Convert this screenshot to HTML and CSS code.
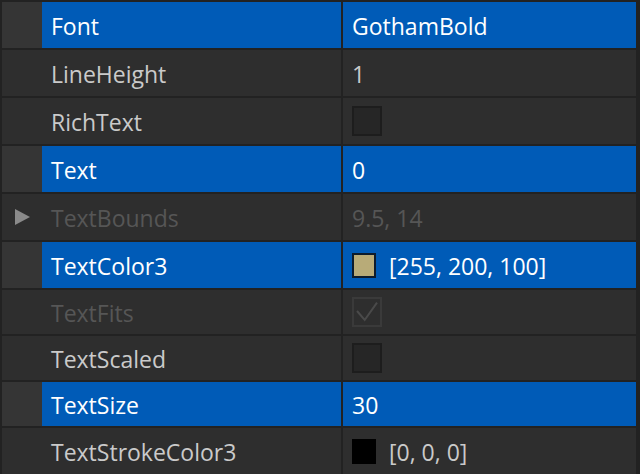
FILE: index.html
```html
<!DOCTYPE html>
<html>
<head>
<meta charset="utf-8">
<link rel="stylesheet" href="styles.css">
</head>
<body>
<div class="props">
  <div class="row selected">
    <div class="name-cell"><span class="gutter"></span><span class="name">Font</span></div>
    <div class="value-cell"><span class="value">GothamBold</span></div>
  </div>
  <div class="row">
    <div class="name-cell"><span class="gutter"></span><span class="name">LineHeight</span></div>
    <div class="value-cell"><span class="value">1</span></div>
  </div>
  <div class="row">
    <div class="name-cell"><span class="gutter"></span><span class="name">RichText</span></div>
    <div class="value-cell"><span class="checkbox"></span></div>
  </div>
  <div class="row selected">
    <div class="name-cell"><span class="gutter"></span><span class="name">Text</span></div>
    <div class="value-cell"><span class="value">0</span></div>
  </div>
  <div class="row disabled">
    <div class="name-cell"><span class="gutter"><svg class="expander" width="15" height="16" viewBox="0 0 15 16"><polygon points="0,0 15,8 0,16" fill="#8a8a8a"/></svg></span><span class="name">TextBounds</span></div>
    <div class="value-cell"><span class="value">9.5, 14</span></div>
  </div>
  <div class="row selected">
    <div class="name-cell"><span class="gutter"></span><span class="name">TextColor3</span></div>
    <div class="value-cell"><span class="swatch swatch-tan"></span><span class="value">[255, 200, 100]</span></div>
  </div>
  <div class="row disabled row-short">
    <div class="name-cell"><span class="gutter"></span><span class="name">TextFits</span></div>
    <div class="value-cell"><span class="checkbox checkbox-disabled"><svg width="26" height="26" viewBox="0 0 26 26"><polyline points="3,12 10.7,21 23,3.7" fill="none" stroke="#4a4a4a" stroke-width="2"/></svg></span></div>
  </div>
  <div class="row row-short">
    <div class="name-cell"><span class="gutter"></span><span class="name">TextScaled</span></div>
    <div class="value-cell"><span class="checkbox"></span></div>
  </div>
  <div class="row selected row-short">
    <div class="name-cell"><span class="gutter"></span><span class="name">TextSize</span></div>
    <div class="value-cell"><span class="value">30</span></div>
  </div>
  <div class="row">
    <div class="name-cell"><span class="gutter"></span><span class="name">TextStrokeColor3</span></div>
    <div class="value-cell"><span class="swatch swatch-black"></span><span class="value">[0, 0, 0]</span></div>
  </div>
</div>
</body>
</html>
```
FILE: styles.css
```css
html, body {
  margin: 0;
  padding: 0;
  background: #222222;
  overflow: hidden;
}

body {
  width: 640px;
  height: 474px;
  font-family: "Open Sans", "Liberation Sans", sans-serif;
  font-size: 23px;
}

.props {
  display: flex;
  flex-direction: column;
  gap: 2px;
  padding: 2px 4px 0 2px;
}

.row {
  display: grid;
  grid-template-columns: 339px 293px;
  column-gap: 2px;
  height: 46px;
  flex-shrink: 0;
}

.row-short {
  height: 44px;
}

.name-cell {
  display: flex;
  align-items: stretch;
  background: #2e2e2e;
}

.gutter {
  width: 40px;
  flex-shrink: 0;
  display: flex;
  align-items: center;
  justify-content: center;
}

.name {
  flex: 1;
  display: flex;
  align-items: center;
  padding: 2px 0 0 9px;
  color: #cacaca;
  white-space: nowrap;
}

.value-cell {
  display: flex;
  align-items: center;
  padding-left: 9px;
  background: #2e2e2e;
  color: #cacaca;
  white-space: nowrap;
}

.value {
  padding-top: 2px;
}

.selected .gutter {
  background: #353535;
}

.selected .name,
.selected .value-cell {
  background: #005bb7;
  color: #ffffff;
}

.disabled .name,
.disabled .value {
  color: #565656;
}

.expander {
  margin-left: 1px;
}

.checkbox {
  box-sizing: border-box;
  width: 30px;
  height: 30px;
  border: 2px solid #1d1d1d;
  background: #262626;
  display: flex;
  align-items: center;
  justify-content: center;
}

.checkbox-disabled {
  border-color: #3a3a3a;
  background: #2e2e2e;
}

.swatch {
  box-sizing: border-box;
  width: 24px;
  height: 25px;
  margin-right: 13px;
  flex-shrink: 0;
}

.swatch-tan {
  background: #b8ab78;
  border: 2px solid #0d1b2c;
}

.swatch-black {
  background: #000000;
}
```
